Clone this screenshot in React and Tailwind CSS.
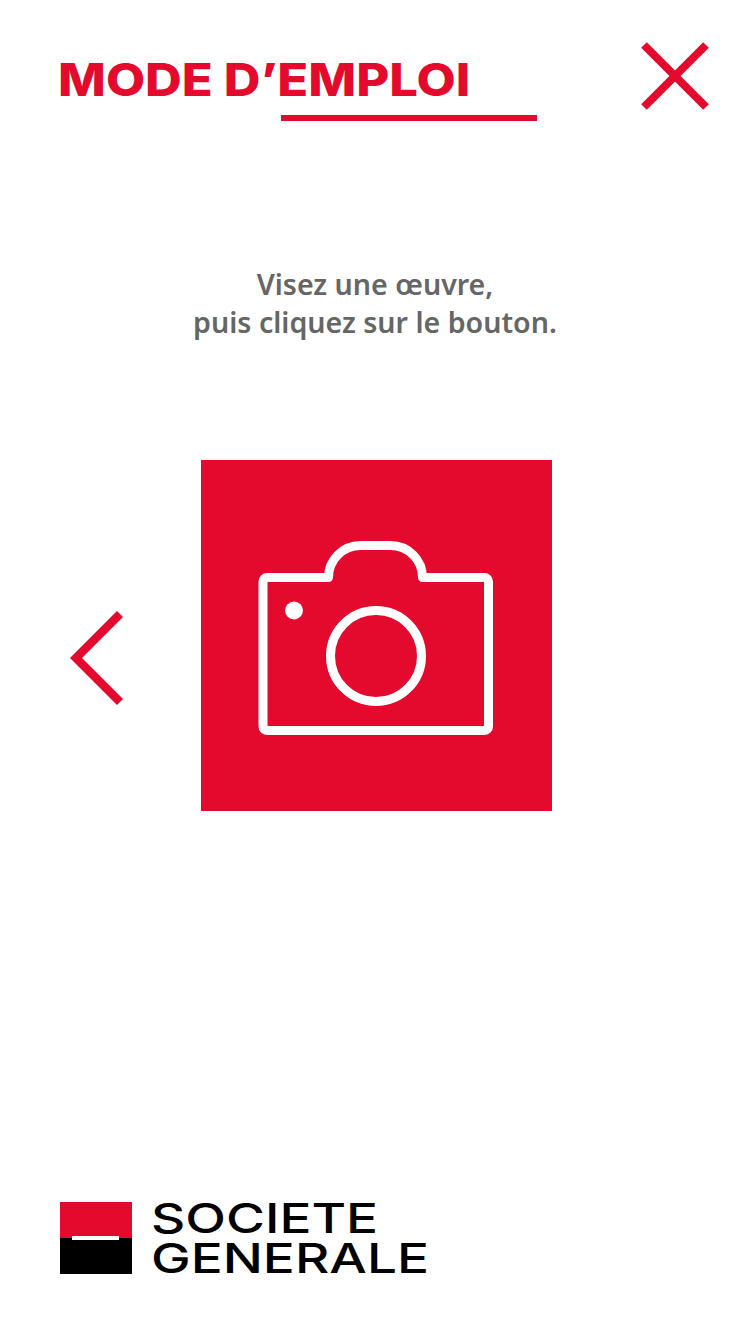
import React from "react";

function CloseIcon() {
  return (
    <svg width="68" height="68" viewBox="0 0 68 68" fill="none" stroke="#e30a2d" strokeWidth="8">
      <path d="M3 3 L65 65 M65 3 L3 65" />
    </svg>
  );
}

function ChevronLeft() {
  return (
    <svg width="54" height="94" viewBox="0 0 54 94" fill="none" stroke="#e30a2d" strokeWidth="8.5">
      <path d="M50 3 L6 47 L50 91" />
    </svg>
  );
}

function CameraIcon() {
  return (
    <svg width="351" height="351" viewBox="0 0 351 351" fill="none" stroke="#fff" strokeWidth="9" strokeLinejoin="round">
      <path d="M66 117.5 H127.5 A32 32 0 0 1 159.5 85.5 H189.5 A32 32 0 0 1 221.5 117.5 H283.5 A4 4 0 0 1 287.5 121.5 V266.5 A4 4 0 0 1 283.5 270.5 H66 A4 4 0 0 1 62 266.5 V121.5 A4 4 0 0 1 66 117.5 Z" />
      <circle cx="175" cy="196" r="45.5" />
      <circle cx="93" cy="150.5" r="9" fill="#fff" stroke="none" />
    </svg>
  );
}

function LogoMark() {
  return (
    <svg width="72" height="72" viewBox="0 0 72 72">
      <rect width="72" height="36" fill="#e30a2d" />
      <rect y="36" width="72" height="36" fill="#000" />
      <rect x="12" y="34" width="47" height="4" fill="#fff" />
    </svg>
  );
}

export default function App() {
  return (
    <div className="w-[750px] h-[1334px] bg-white flex flex-col font-['Inter',sans-serif]">
      {/* Header */}
      <div className="flex justify-between pl-[58px] pr-[41px] pt-[42px]">
        <div className="pt-[10px]">
          <h1 className="text-[45px] leading-[56px] font-extrabold text-[#e30a2d] whitespace-nowrap scale-x-[1.128] origin-left">
            MODE D’EMPLOI
          </h1>
          <div className="ml-[223px] mt-[7px] w-[256px] h-[6px] bg-[#e30a2d]" />
        </div>
        <CloseIcon />
      </div>

      {/* Instructions */}
      <p className="mt-[144px] text-center text-[28.6px] leading-[38px] font-semibold text-[#666] font-['Noto_Sans',sans-serif]">
        Visez une œuvre,
        <br />
        puis cliquez sur le bouton.
      </p>

      {/* Camera button */}
      <div className="mt-[119px] flex items-start pl-[70px]">
        <div className="mt-[151px]">
          <ChevronLeft />
        </div>
        <div className="ml-[77px] w-[351px] h-[351px] bg-[#e30a2d]">
          <CameraIcon />
        </div>
      </div>

      {/* Logo */}
      <div className="mt-auto mb-[60px] ml-[60px] flex items-center gap-[19px] h-[72px]">
        <LogoMark />
        <div className="text-[41px] leading-[40px] font-medium text-black scale-x-[1.295] origin-left">
          <div>SOCIETE</div>
          <div>GENERALE</div>
        </div>
      </div>
    </div>
  );
}
